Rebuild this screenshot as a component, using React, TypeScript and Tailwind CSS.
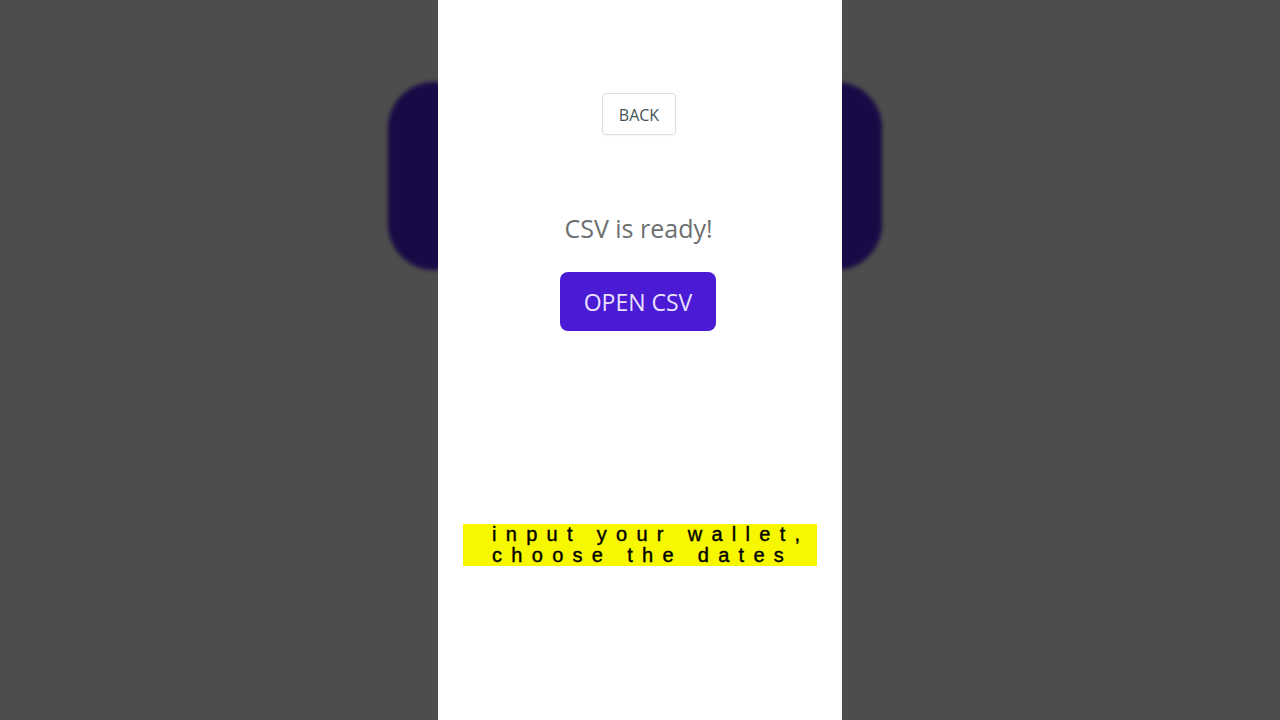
export default function App() {
  return (
    <div className="relative flex h-screen w-full justify-center overflow-hidden bg-[#4d4d4d]">
      {/* blurred backdrop of the zoomed video frame */}
      <div className="absolute left-[388px] top-[82px] h-[188px] w-[494px] rounded-[46px] bg-[#190a46] blur-[2px]" />

      <div className="relative flex h-full w-[404px] flex-col items-center bg-white pt-[93px] font-['Open_Sans',sans-serif]">
        <button className="mr-[2px] h-[42px] w-[74px] rounded-[4px] border border-[#dcdfe0] pt-[2px] text-[16px] text-[#435455] shadow-[0_1px_1px_rgba(0,0,0,0.04)]">
          BACK
        </button>

        <p className="mr-[3px] mt-[76px] text-[25px] leading-[34px] text-[#6c6f6f]">
          CSV is ready!
        </p>

        <button className="mr-[4px] mt-[27px] h-[59px] w-[156px] rounded-[8px] bg-[#4a1ad4] pt-[2px] text-[23px] text-[#e9e1ff]">
          OPEN CSV
        </button>

        <div className="mt-[193px] w-[354px] bg-[#f7f700] pl-[29px] font-['Liberation_Sans',sans-serif] text-[20px] leading-[21px] tracking-[9.3px] text-black [-webkit-text-stroke:0.4px_black]">
          <div>input your wallet,</div>
          <div>choose the dates</div>
        </div>
      </div>
    </div>
  );
}
